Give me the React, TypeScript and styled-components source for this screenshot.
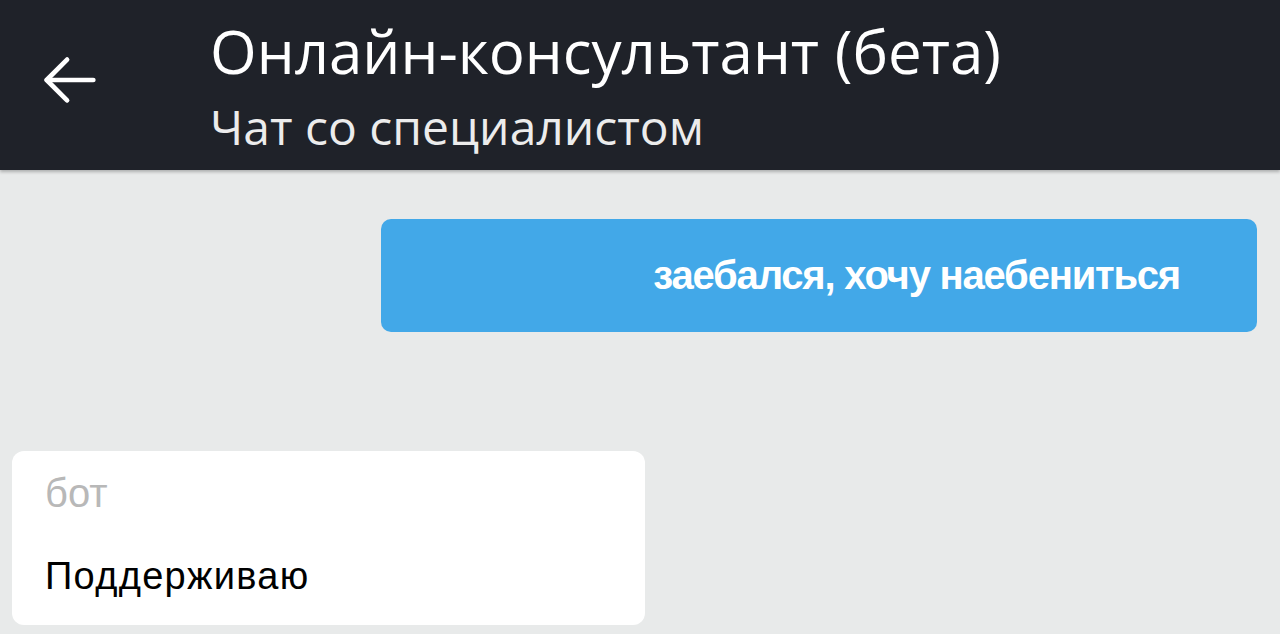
import React from 'react';
import styled, { createGlobalStyle } from 'styled-components';

const GlobalStyle = createGlobalStyle`
  html, body {
    margin: 0;
    padding: 0;
    background: #e8eaea;
    overflow: hidden;
  }
`;

const Screen = styled.div`
  display: flex;
  flex-direction: column;
  width: 1280px;
  height: 634px;
  background: #e8eaea;
`;

const Header = styled.header`
  display: flex;
  align-items: stretch;
  height: 170px;
  flex-shrink: 0;
  background: #1f2229;
  box-shadow: 0 2px 3px rgba(0, 0, 0, 0.25);
`;

const BackButton = styled.button`
  display: flex;
  align-items: center;
  justify-content: center;
  width: 140px;
  padding: 0 0 10px 0;
  border: none;
  background: transparent;
  color: #ffffff;
  cursor: pointer;
`;

const Titles = styled.div`
  display: flex;
  flex-direction: column;
  margin-left: 70px;
  padding-top: 19px;
  color: #ffffff;
  font-family: 'Open Sans', 'Noto Sans', sans-serif;
`;

const Title = styled.h1`
  margin: 0;
  font-size: 60px;
  font-weight: 400;
  line-height: 64px;
`;

const Subtitle = styled.div`
  margin-top: 18px;
  font-size: 48px;
  line-height: 52px;
  color: #ececec;
`;

const Feed = styled.main`
  display: flex;
  flex-direction: column;
  padding: 49px 23px 0 12px;
`;

const OutgoingRow = styled.div`
  display: flex;
  justify-content: flex-end;
`;

const Outgoing = styled.div`
  display: flex;
  align-items: center;
  justify-content: flex-end;
  width: 876px;
  height: 113px;
  box-sizing: border-box;
  padding-right: 77px;
  border-radius: 10px;
  background: #42a8e8;
  color: #ffffff;
  font-family: 'Liberation Sans', Arial, sans-serif;
  font-weight: 700;
  font-size: 40px;
  letter-spacing: -1.2px;
`;

const Incoming = styled.div`
  display: flex;
  flex-direction: column;
  width: 633px;
  height: 174px;
  box-sizing: border-box;
  margin-top: 119px;
  padding: 22px 33px 0;
  border-radius: 12px;
  background: #ffffff;
  font-family: 'Liberation Sans', Arial, sans-serif;
`;

const Author = styled.div`
  font-size: 40px;
  line-height: 40px;
  color: #b8b8b8;
`;

const Text = styled.div`
  margin-top: 43px;
  font-size: 38px;
  line-height: 40px;
  letter-spacing: 1.3px;
  color: #000000;
`;

const ArrowIcon = () => (
  <svg width="70" height="70" viewBox="0 0 24 24" fill="none" stroke="currentColor" strokeWidth="1.6" strokeLinecap="round" strokeLinejoin="round">
    <path d="M20 12H4" />
    <path d="M11 5l-7 7 7 7" />
  </svg>
);

const App: React.FC = () => {
  return (
    <>
      <GlobalStyle />
      <Screen>
        <Header>
          <BackButton aria-label="Назад">
            <ArrowIcon />
          </BackButton>
          <Titles>
            <Title>Онлайн-консультант (бета)</Title>
            <Subtitle>Чат со специалистом</Subtitle>
          </Titles>
        </Header>
        <Feed>
          <OutgoingRow>
            <Outgoing>заебался, хочу наебениться</Outgoing>
          </OutgoingRow>
          <Incoming>
            <Author>бот</Author>
            <Text>Поддерживаю</Text>
          </Incoming>
        </Feed>
      </Screen>
    </>
  );
};

export default App;
